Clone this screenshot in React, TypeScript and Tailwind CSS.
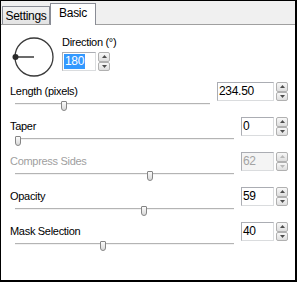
import React from "react";

type Row = {
  label: string;
  value: string;
  frac: number;
  box: string;
  disabled?: boolean;
};

const rows: Row[] = [
  { label: "Length (pixels)", value: "234.50", frac: 0.245, box: "w-[57px]" },
  { label: "Taper", value: "0", frac: 0, box: "w-[33px]" },
  { label: "Compress Sides", value: "62", frac: 0.62, box: "w-[33px]", disabled: true },
  { label: "Opacity", value: "59", frac: 0.59, box: "w-[33px]" },
  { label: "Mask Selection", value: "40", frac: 0.4, box: "w-[33px]" },
];

function Arrow({ up, color }: { up?: boolean; color: string }) {
  return (
    <svg width="5" height="3" viewBox="0 0 5 3">
      <path d={up ? "M2.5 0 L5 3 L0 3 Z" : "M0 0 L5 0 L2.5 3 Z"} fill={color} />
    </svg>
  );
}

function Spinner({ disabled }: { disabled?: boolean }) {
  const btn =
    "flex flex-1 items-center justify-center rounded-[2px] border border-[#b0b0b0] bg-gradient-to-b from-[#f8f8f8] to-[#dedede]";
  const color = disabled ? "#b8b8b8" : "#4d4d4d";
  return (
    <div className="ml-[2px] flex h-full w-[12px] flex-col">
      <div className={btn}>
        <Arrow up color={color} />
      </div>
      <div className={btn}>
        <Arrow color={color} />
      </div>
    </div>
  );
}

function NumBox({
  value,
  box,
  disabled,
  selected,
}: {
  value: string;
  box: string;
  disabled?: boolean;
  selected?: boolean;
}) {
  return (
    <div className="flex h-[19px]">
      <div
        className={`flex items-center border border-[#abadb3] border-b-[#dadcde] border-r-[#dadcde] pl-[1px] text-[12px] tracking-[-0.3px] ${box} ${
          disabled ? "bg-[#f4f4f4] text-[#a3a3a3]" : "bg-white text-black"
        }`}
      >
        <span className={selected ? "bg-[#3399ff] px-[1px] leading-[15px] text-white" : "leading-[15px]"}>
          {value}
        </span>
      </div>
      <Spinner disabled={disabled} />
    </div>
  );
}

function Slider({ frac }: { frac: number }) {
  return (
    <div className="relative ml-[5px] mr-[7px] h-[21px]">
      <div className="absolute left-0 right-0 top-[5px] h-[2px] border-t border-t-[#b4b4b4] border-b border-b-[#f2f2f2]" />
      <div
        className="absolute top-[3px] h-[10px] w-[6px] rounded-t-[1px] rounded-b-[3px] border border-[#858585] bg-gradient-to-b from-[#fbfbfb] to-[#d8d8d8]"
        style={{ left: `calc(${frac} * (100% - 6px))` }}
      />
    </div>
  );
}

function Dial() {
  return (
    <svg width="44" height="44" viewBox="0 0 44 44">
      <circle cx="22" cy="22" r="19" fill="none" stroke="#3a3a3a" strokeWidth="1.3" />
      <line x1="22" y1="22" x2="3" y2="22" stroke="#3a3a3a" strokeWidth="1.5" />
      <circle cx="3.5" cy="22" r="3" fill="#2a2a2a" />
    </svg>
  );
}

export default function App() {
  return (
    <div className="h-[282px] w-[297px] overflow-hidden border-b-2 border-l border-r-2 border-t border-black bg-white font-['Liberation_Sans',Arial,sans-serif] text-[11px] tracking-[-0.3px] text-black">
      {/* tab strip */}
      <div className="flex h-[24px] items-end border-b border-[#a0a0a0] bg-[#f0f0f0] pl-[1px]">
        <div className="flex h-[18px] w-[48px] items-center justify-center border border-b-0 border-[#898c95] bg-gradient-to-b from-[#f2f2f2] to-[#e3e3e3] text-[12px] leading-none">
          Settings
        </div>
        <div className="-mb-px flex h-[22px] w-[46px] items-center justify-center border border-b-0 border-[#898c95] bg-white pb-[3px] text-[12px] leading-none">
          Basic
        </div>
      </div>

      {/* direction */}
      <div className="flex h-[59px] pt-[10px]">
        <div className="ml-[11px]">
          <Dial />
        </div>
        <div className="ml-[6px] flex flex-col">
          <div className="h-[14px] leading-[14px]">Direction (°)</div>
          <div className="mt-[3px]">
            <NumBox value="180" box="w-[34px]" selected />
          </div>
        </div>
      </div>

      {/* sliders */}
      <div className="flex flex-col pl-[9px] pr-[7px]">
        {rows.map((r) => (
          <div key={r.label} className="flex h-[35px] items-start">
            <div className="flex-1">
              <div className={`h-[14px] leading-[14px] ${r.disabled ? "text-[#a0a0a0]" : ""}`}>{r.label}</div>
              <Slider frac={r.frac} />
            </div>
            <div className="-mt-[2px]">
              <NumBox value={r.value} box={r.box} disabled={r.disabled} />
            </div>
          </div>
        ))}
      </div>
    </div>
  );
}
